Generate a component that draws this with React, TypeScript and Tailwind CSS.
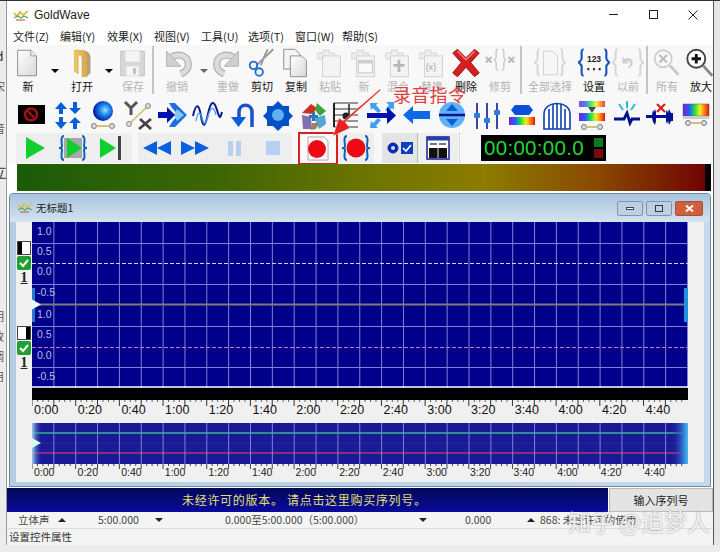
import React from "react";

const F = { fontFamily: '"Noto Sans CJK SC","Noto Sans",sans-serif' };

function Defs() {
  return (
    <svg width="0" height="0" className="absolute">
      <defs>
        <linearGradient id="rb" x1="0" x2="1" y1="0" y2="0">
          <stop offset="0" stopColor="#7a1fd0" />
          <stop offset=".25" stopColor="#2060ff" />
          <stop offset=".45" stopColor="#20e040" />
          <stop offset=".65" stopColor="#f0f020" />
          <stop offset=".85" stopColor="#ff7010" />
          <stop offset="1" stopColor="#e01010" />
        </linearGradient>
        <linearGradient id="pg" x1="0" x2="1" y1="0" y2="1">
          <stop offset="0" stopColor="#ffffff" />
          <stop offset="1" stopColor="#d8d8d8" />
        </linearGradient>
        <linearGradient id="fold" x1="0" x2="1" y1="0" y2="0">
          <stop offset="0" stopColor="#f0c860" />
          <stop offset="1" stopColor="#d8a848" />
        </linearGradient>
        <radialGradient id="sph" cx=".6" cy=".45" r=".6">
          <stop offset="0" stopColor="#a0e0ff" />
          <stop offset=".4" stopColor="#2090f0" />
          <stop offset="1" stopColor="#0010a0" />
        </radialGradient>
      </defs>
    </svg>
  );
}

const S = ({ w = 34, h = 34, vb, children }: { w?: number; h?: number; vb?: string; children: React.ReactNode }) => (
  <svg width={w} height={h} viewBox={vb || `0 0 ${w} ${h}`} className="block shrink-0">
    {children}
  </svg>
);

const Page = () => (
  <>
    <path d="M7 4h14l6 6v21H7z" fill="url(#pg)" stroke="#8a8a8a" />
    <path d="M21 4v6h6" fill="#eee" stroke="#999" />
  </>
);

const Clip = ({ children }: { children?: React.ReactNode }) => (
  <>
    <path d="M5 7h6v-3h6v3h6v6H5z" fill="#efefef" stroke="#d0d0d0" />
    <rect x="10" y="10" width="19" height="22" fill="#f4f4f4" stroke="#cfcfcf" />
    {children}
  </>
);

const icons: Record<string, React.ReactNode> = {
  new: <Page />,
  open: (
    <>
      <path d="M10 4h8c3 0 5 3 5 7v21h-5V13c0-3-1-4-3-4-1 0-1 2-1 4v16l-4-3z" fill="url(#fold)" stroke="#c89838" strokeWidth=".5" />
      <path d="M18 4c5 0 9 3 9 8v16l-4 4V11c0-3-2-6-5-7z" fill="#b8a070" />
    </>
  ),
  save: (
    <>
      <path d="M5 5h25v26H5z" fill="#d8d8d8" stroke="#c0c0c0" />
      <rect x="10" y="5" width="15" height="11" fill="#f5f5f5" />
      <rect x="11" y="21" width="13" height="10" fill="#f5f5f5" />
      <rect x="18" y="23" width="3" height="6" fill="#bbb" />
    </>
  ),
  undo: (
    <>
      <path d="M11 12c9-6 19-2 19 7 0 5-3 8-8 10" stroke="#b0b0b0" strokeWidth="7.5" fill="none" />
      <path d="M11 12c9-6 19-2 19 7 0 5-3 8-8 10" stroke="#dcdcdc" strokeWidth="5" fill="none" />
      <path d="M7 5v16h15z" fill="#d0d0d0" stroke="#b0b0b0" />
    </>
  ),
  redo: (
    <>
      <path d="M25 12c-9-6-19-2-19 7 0 5 3 8 8 10" stroke="#b0b0b0" strokeWidth="7.5" fill="none" />
      <path d="M25 12c-9-6-19-2-19 7 0 5 3 8 8 10" stroke="#dcdcdc" strokeWidth="5" fill="none" />
      <path d="M29 5v16H14z" fill="#d0d0d0" stroke="#b0b0b0" />
    </>
  ),
  cut: (
    <>
      <path d="M30 3 12 20M24 3c-3 6-6 13-7 17" stroke="#999" strokeWidth="2" fill="none" />
      <circle cx="9" cy="20" r="4" fill="none" stroke="#1f70d0" strokeWidth="2" />
      <circle cx="15" cy="27" r="4" fill="none" stroke="#1f70d0" strokeWidth="2" />
    </>
  ),
  copy: (
    <>
      <path d="M5 3h12l5 5v16H5z" fill="#f4f4f4" stroke="#8a8a8a" />
      <path d="M12 10h12l5 5v17H12z" fill="url(#pg)" stroke="#8a8a8a" />
    </>
  ),
  paste: <Clip />,
  pnew: (
    <Clip>
      <rect x="12" y="15" width="15" height="13" fill="#fafafa" stroke="#c4c4c4" />
      <rect x="12" y="15" width="15" height="3" fill="#cfcfcf" />
    </Clip>
  ),
  pmix: (
    <Clip>
      <path d="M19 14v13M13 20h12" stroke="#b8b8b8" strokeWidth="3" />
    </Clip>
  ),
  prep: (
    <Clip>
      <text x="11" y="25" fontSize="10" fill="#aaa" fontFamily="Liberation Sans">{"{x}"}</text>
    </Clip>
  ),
  del: (
    <>
      <path d="M4 7 9 3l9 9 9-9 5 4-9 10 9 11-5 4-9-10-9 10-5-4 9-11z" fill="#d42020" stroke="#a01010" />
      <path d="M9 5l9 9 9-9" stroke="#f08080" strokeWidth="1.5" fill="none" />
    </>
  ),
  trim: (
    <>
      <path d="M3 11l6 6M9 11l-6 6M27 11l6 6M33 11l-6 6" stroke="#b8b8b8" strokeWidth="2" />
      <path d="M16 3c-3 0-2 3-2 7s-2 3-2 4 2 0 2 4-1 7 2 7M20 3c3 0 2 3 2 7s2 3 2 4-2 0-2 4 1 7-2 7" stroke="#c8c8c8" strokeWidth="1.5" fill="none" />
    </>
  ),
  all: (
    <>
      <path d="M7 3c-3 0-2 5-2 9s-3 4-3 5 3 1 3 5-1 9 2 9M29 3c3 0 2 5 2 9s3 4 3 5-3 1-3 5 1 9-2 9" stroke="#d4d4d4" strokeWidth="2" fill="none" />
      <path d="M11 5h10l5 5v20H11z" fill="#f6f6f6" stroke="#d0d0d0" />
    </>
  ),
  set: (
    <>
      <path d="M7 3c-3 0-2 5-2 9s-3 4-3 5 3 1 3 5-1 9 2 9M29 3c3 0 2 5 2 9s3 4 3 5-3 1-3 5 1 9-2 9" stroke="#1050c0" strokeWidth="2.2" fill="none" />
      <text x="18" y="16" textAnchor="middle" fontSize="9" fontWeight="700" fill="#222" fontFamily="Liberation Sans">123</text>
      <path d="M11 24h2M17 24h2M23 24h2" stroke="#222" strokeWidth="2.5" />
    </>
  ),
  prev: (
    <>
      <path d="M7 3c-3 0-2 5-2 9s-3 4-3 5 3 1 3 5-1 9 2 9M29 3c3 0 2 5 2 9s3 4 3 5-3 1-3 5 1 9-2 9" stroke="#d4d4d4" strokeWidth="2" fill="none" />
      <path d="M12 11v7h7l-2-2c3-1 4 1 3 3s-2 4-3 4c4 0 6-3 6-6 0-4-5-6-8-4z" fill="#d0d0d0" />
    </>
  ),
  zall: (
    <>
      <circle cx="14" cy="13" r="9" fill="#f8f8f8" stroke="#d0d0d0" strokeWidth="2" />
      <path d="M10 9l8 8M18 9l-8 8" stroke="#bbb" strokeWidth="2" />
      <path d="M21 20l9 10" stroke="#c8c8c8" strokeWidth="3" />
    </>
  ),
  zin: (
    <>
      <circle cx="13" cy="13" r="9.5" fill="#fff" stroke="#444" strokeWidth="2" />
      <path d="M13 8v10M8 13h10" stroke="#111" strokeWidth="3" />
      <path d="M20 20l10 11" stroke="#888" strokeWidth="3" />
    </>
  ),
};

function Btn({ cls, icon, label, dim }: { cls: string; icon: string; label: string; dim?: boolean }) {
  return (
    <div className={`flex flex-col items-center shrink-0 overflow-visible ${cls}`}>
      <div className="h-[33px] w-[34px] shrink-0">
        <S w={34} h={34} vb="0 0 36 35">{icons[icon]}</S>
      </div>
      <div className={`text-[11px] leading-[14px] whitespace-nowrap ${dim ? "text-[#b4b4b4]" : "text-[#111]"}`}>{label}</div>
    </div>
  );
}

const Sep = ({ cls }: { cls: string }) => (
  <div className={`flex justify-center shrink-0 ${cls}`}>
    <div className="w-[2px] h-[48px] bg-[#c4c4c4]" />
  </div>
);

const DropA = ({ cls, c }: { cls: string; c: string }) => (
  <div className={`flex justify-center pt-[23px] shrink-0 ${cls}`}>
    <div className={`w-0 h-0 border-x-[4px] border-x-transparent border-t-[4px] ${c}`} />
  </div>
);

const BL = "#0a5fd8";

const t2: React.ReactNode[] = [
  <>
    <rect x="1" y="6" width="27" height="19" fill="#000" />
    <circle cx="14" cy="15.5" r="6" fill="none" stroke="#a01014" strokeWidth="2.5" />
    <path d="M10 11l8 9" stroke="#a01014" strokeWidth="2.5" />
  </>,
  <path d="M9 3l6 7h-4v5H7v-5H3zM23 15l-6-6h4V3h4v6h4zM9 30l6-7h-4v-5H7v5H3zM23 18l-6 6h4v6h4v-6h4z" fill={BL} />,
  <>
    <circle cx="16" cy="12" r="10" fill="url(#sph)" />
    <circle cx="7" cy="27" r="2.5" fill="#ddd" stroke="#777" />
    <circle cx="25" cy="27" r="2.5" fill="#ddd" stroke="#777" />
    <path d="M9 27h14" stroke="#c0b060" strokeWidth="1.5" />
  </>,
  <>
    <path d="M3 3l6 6 6-6M9 9v7" stroke="#555" strokeWidth="3" fill="none" />
    <path d="M17 30l12-10M18 20l11 10" stroke="#444" strokeWidth="2.8" />
    <path d="M7 25L26 7" stroke="#d0c060" strokeWidth="1.6" />
    <circle cx="7" cy="25" r="2.5" fill="#ddd" stroke="#888" />
    <circle cx="26" cy="7" r="2.5" fill="#ddd" stroke="#888" />
  </>,
  <>
    <path d="M12 4h6l12 12-12 12h-6l3-5 6-7-6-7z" fill="#1a70e0" />
    <path d="M20 10l7 6-7 6-3-6z" fill="#80c8f0" />
    <path d="M1 13h9V8l8 8-8 8v-5H1z" fill="#000fb0" />
  </>,
  <>
    <path d="M1 17c3-14 6-12 8 0s4 12 7-2 6-14 9-4 3 8 5 2" stroke="#0a1a90" strokeWidth="2" fill="none" />
    <path d="M4 22c2-10 4-10 6-3s3 8 6-2 6-10 8-1" stroke="#40a0e8" strokeWidth="1.3" fill="none" />
  </>,
  <>
    <path d="M12 20V13c0-9 13-9 13 0v15" stroke="#1a50c8" strokeWidth="3.5" fill="none" />
    <path d="M4 18h15l-7.5 10z" fill={BL} />
  </>,
  <>
    <path d="M16 2l5 5h6v6l4 4-4 4v6h-6l-5 5-5-5H5v-6l-4-4 4-4V7h6z" fill="#0050c8" />
    <circle cx="16" cy="16" r="6" fill="#60b0f0" />
  </>,
  <>
    <path d="M5 14 14 5l6 4-4 6z" fill="#d03020" />
    <path d="M20 4l9 8-6 5-5-6z" fill="#40a040" />
    <path d="M5 16l9 2 1 12H6z" fill="#8070b0" />
    <path d="M17 19l11-3 1 9-7 5z" fill="#50a8d8" />
    <path d="M15 24h7l-3 6-5 1z" fill="#a08060" />
    <path d="M15 13h3v3h3v3h-3v3h-3v-3h-3v-3h3z" fill="#2878c0" />
  </>,
  <>
    <path d="M3 4h24M3 10h24M3 16h24M3 22h24M3 28h24" stroke="#333" strokeWidth="1.2" />
    <path d="M3 4v24" stroke="#222" strokeWidth="2" />
    <circle cx="15" cy="17" r="3.5" fill="#222" />
    <path d="M18 5v12" stroke="#222" strokeWidth="1.5" />
  </>,
  <>
    <path d="M4 4h8l-2 2 5 6-3 2-5-5-2 2zM4 29h8l-2-2 5-6-3-2-5 5-2-2zM20 3h8v8l-2-2-4 4-3-2 4-5z" fill="#40a0f0" />
    <path d="M1 14h20V8l9 8.5-9 8.5v-6H1z" fill="#000fb0" />
  </>,
  <path d="M2 16l10-9v5h17v8H12v5z" fill="#0a6ae8" />,
  <>
    <circle cx="16" cy="16" r="13" fill="#60b0f8" />
    <path d="M16 5l6 7H10zM16 27l6-7H10z" fill="#0a5fd8" />
    <path d="M3 16h26" stroke="#001090" strokeWidth="2.5" />
  </>,
  <>
    <path d="M6 4v26M16 4v26M26 4v26" stroke="#000a90" strokeWidth="1.5" />
    <rect x="3" y="14" width="6" height="5" rx="1" fill="#2a80e0" />
    <rect x="13" y="19" width="6" height="5" rx="1" fill="#2a80e0" />
    <rect x="23" y="11" width="6" height="5" rx="1" fill="#2a80e0" />
  </>,
  <>
    <path d="M9 6h14l4 5-4 5H9l-4-5z" fill="#0a50d8" />
    <path d="M3 18h26v8H3z" fill="url(#rb)" />
  </>,
  <>
    <path d="M3 30V15C3 1 29 1 29 15v15z" fill="#fff" stroke="#0a40b0" strokeWidth="1.6" />
    <path d="M8 30V10M12 30V5M16 30V4M20 30V5M24 30V10" stroke="#0a40b0" strokeWidth="1.6" />
  </>,
  <>
    <rect x="3" y="2" width="26" height="6" fill="url(#rb)" opacity=".8" />
    <path d="M12 8h8l-4 6z" fill="#355" />
    <rect x="3" y="14" width="26" height="8" fill="url(#rb)" />
    <circle cx="8" cy="28" r="2.5" fill="#ddd" stroke="#777" />
    <circle cx="24" cy="28" r="2.5" fill="#ddd" stroke="#777" />
    <path d="M10 28h12" stroke="#c0b060" strokeWidth="1.5" />
  </>,
  <>
    <path d="M16 2v7M8 5l4 6M24 5l-4 6" stroke="#30b8d8" strokeWidth="2" />
    <path d="M3 20h10l3-6 3 10 2-4h8" stroke="#001090" strokeWidth="2.8" fill="none" />
  </>,
  <>
    <path d="M1 16h6l1-5 1 2 1-3 1 3v3h10v-3l1-2 1 3 1-4 2 4h2v8h-2l-2 4-1-4-1 3-1-3v-3H11v3l-1 4-2-3-1-4H1z" fill="#001090" />
    <path d="M12 5l8 8M20 5l-8 8" stroke="#d02020" strokeWidth="2.2" />
  </>,
  <>
    <rect x="3" y="5" width="26" height="12" fill="url(#rb)" stroke="#555" strokeWidth=".5" />
    <rect x="3" y="17" width="26" height="3" fill="#ccc" />
    <circle cx="8" cy="24" r="2.5" fill="#ddd" stroke="#777" />
    <circle cx="24" cy="24" r="2.5" fill="#ddd" stroke="#777" />
    <path d="M10 24h12" stroke="#c0b060" strokeWidth="1.5" />
  </>,
];

const TOP = Array.from({ length: 30 }, (_, i) => 21.85 * (i + 1));
const times = ["0:00","0:20","0:40","1:00","1:20","1:40","2:00","2:20","2:40","3:00","3:20","3:40","4:00","4:20","4:40"];

function WaveMain() {
  return (
    <svg width="656" height="195" viewBox="0 0 656 195" className="block">
      <rect width="656" height="166" fill="#00008a" />
      {TOP.map((x) => <path key={x} d={`M${x} 0V166`} stroke="#7f82d4" strokeWidth="1" />)}
      <path d="M0 21.5H656M0 62.5H656M0 104.5H656M0 145.5H656" stroke="#7f82d4" />
      <path d="M0 41.5H656" stroke="#d0d0f4" strokeDasharray="4 2" />
      <path d="M0 125.5H656" stroke="#c078d0" strokeDasharray="4 2" />
      <path d="M0 82.5H656" stroke="#7c7c7c" strokeWidth="2" />
      <path d="M0 165H656" stroke="#fff" strokeWidth="1.5" />
      <rect x="0" y="66" width="3" height="34" fill="#2a78d0" />
      <path d="M0 77.5l9 5-9 5z" fill="#e8fff0" />
      <rect x="652" y="66" width="4" height="34" fill="#2090e0" />
      {[["1.0", 9], ["0.5", 29], ["0.0", 49], ["-0.5", 70], ["1.0", 92], ["0.5", 112], ["0.0", 133], ["-0.5", 154]].map(([t, y], i) => (
        <text key={i} x="5" y={Number(y) + 4} fontSize="10.5" fill="#b8bce8" fontFamily="Liberation Sans">{t}</text>
      ))}
      <rect y="166" width="656" height="12" fill="#000" />
      {Array.from({ length: 120 }, (_, i) => (
        <path key={i} d={`M${i * 5.46} 178v${i % 4 === 0 ? 6 : 2}`} stroke={i % 4 === 0 ? "#333" : "#666"} />
      ))}
      {times.map((t, i) => (
        <text key={t} x={2 + i * 43.7} y="192" fontSize="12.5" fill="#111" fontFamily="Liberation Sans">{t}</text>
      ))}
    </svg>
  );
}

function WaveOverview() {
  return (
    <svg width="656" height="54" viewBox="0 0 656 54" className="block">
      <defs>
        <linearGradient id="ed" x1="0" x2="1" y1="0" y2="0">
          <stop offset="0" stopColor="#9ad0f0" />
          <stop offset="1" stopColor="#2030a0" stopOpacity="0" />
        </linearGradient>
        <linearGradient id="ed2" x1="1" x2="0" y1="0" y2="0">
          <stop offset="0" stopColor="#40c0f0" />
          <stop offset=".25" stopColor="#3a80e0" />
          <stop offset="1" stopColor="#2030a0" stopOpacity="0" />
        </linearGradient>
      </defs>
      <rect width="656" height="41" fill="#1a1a96" />
      <path d="M0 10H656" stroke="#2a9090" strokeWidth="2" />
      <path d="M0 30H656" stroke="#8c2a80" strokeWidth="2" />
      <path d="M0 20H656" stroke="#2828a8" />
      {TOP.map((x) => <path key={x} d={`M${x} 0V41`} stroke="#7f82d4" />)}
      <rect width="10" height="41" fill="url(#ed)" />
      <rect x="640" width="16" height="41" fill="url(#ed2)" />
      <path d="M0 15l9 5-9 5z" fill="#d8ffe8" />
      {Array.from({ length: 120 }, (_, i) => (
        <path key={i} d={`M${i * 5.46} 41v${i % 4 === 0 ? 5 : 2}`} stroke="#444" />
      ))}
      {times.map((t, i) => (
        <text key={t} x={2 + i * 43.6} y="53" fontSize="10.5" fill="#222" fontFamily="Liberation Sans">{t}</text>
      ))}
    </svg>
  );
}

const ChannelCtl = ({ right }: { right?: boolean }) => (
  <div className="flex flex-col items-center">
    <div className={`w-[14px] h-[14px] border border-[#444] bg-white flex ${right ? "justify-end" : "justify-start"}`}>
      <div className="w-[4px] h-full bg-black" />
    </div>
    <div className="w-[14px] h-[14px] mt-[1px] rounded-[2px] bg-[#20a030] flex items-center justify-center">
      <svg width="12" height="12" viewBox="0 0 12 12"><path d="M2 6l3 3 5-6" stroke="#fff" strokeWidth="2" fill="none" /></svg>
    </div>
    <div className="text-[14px] leading-[15px] font-bold text-[#222] underline" style={{ fontFamily: "Liberation Serif, serif" }}>1</div>
  </div>
);

const TBtn = ({ cls, children }: { cls: string; children: React.ReactNode }) => (
  <div className={`flex items-center justify-center shrink-0 ${cls}`}>{children}</div>
);

function Tri({ up, cls }: { up?: boolean; cls: string }) {
  return (
    <div className={`shrink-0 w-0 h-0 border-x-[4px] border-x-transparent ${up ? "border-b-[4px] border-b-[#222]" : "border-t-[4px] border-t-[#222]"} ${cls}`} />
  );
}

export default function App() {
  return (
    <div className="w-[720px] h-[552px] bg-[#ececec] flex flex-col overflow-hidden relative" style={F}>
      <Defs />
      <div className="h-[1px] bg-[#333] shrink-0" />
      <div className="flex h-[544px] shrink-0">
        <div className="w-[7px] shrink-0 overflow-hidden border-r border-[#999] text-[11px] text-[#555] flex flex-col">
          <div className="mt-[48px] text-[#222] text-[12px] leading-[14px] ml-[-4px]">d</div>
          <div className="mt-[16px] leading-[14px] ml-[-6px]">宋</div>
          <div className="mt-[28px] leading-[14px] ml-[-6px]">音</div>
          <div className="mt-[26px] leading-[20px] ml-[-9px] text-[16px]">立</div>
          <div className="mt-[128px] leading-[14px] ml-[-7px]">明</div>
          <div className="mt-[6px] leading-[14px] ml-[-7px]">政</div>
          <div className="mt-[6px] leading-[14px] ml-[-7px]">调</div>
          <div className="mt-[6px] leading-[14px] ml-[-7px]">用</div>
        </div>

        <div className="w-[707px] shrink-0 flex flex-col bg-white border-r border-[#555]">
          {/* title */}
          <div className="h-[27px] shrink-0 flex items-center bg-white">
            <div className="ml-[6px] mr-[5px]">
              <svg width="16" height="12" viewBox="0 0 16 12">
                <path d="M1 4l3 3 3-4 3 3 5-4" stroke="#d8b030" strokeWidth="1.5" fill="none" />
                <path d="M1 9l4-2 3 2 3-2 4 2" stroke="#50b050" strokeWidth="1.3" fill="none" />
                <path d="M3 11h9" stroke="#d04040" />
              </svg>
            </div>
            <div className="text-[12px] text-[#222]" style={{ fontFamily: "Liberation Sans" }}>GoldWave</div>
            <div className="ml-auto flex items-center">
              <div className="w-[40px] flex justify-center"><div className="w-[9px] h-[1px] bg-[#222]" /></div>
              <div className="w-[40px] flex justify-center"><div className="w-[9px] h-[9px] border border-[#222]" /></div>
              <div className="w-[40px] flex justify-center">
                <svg width="10" height="10" viewBox="0 0 10 10"><path d="M.5.5l9 9M9.5.5l-9 9" stroke="#222" /></svg>
              </div>
            </div>
          </div>
          {/* menu */}
          <div className="h-[16px] shrink-0 flex items-center pl-[6px] text-[11px] text-[#222] leading-none whitespace-nowrap">
            {["文件(Z)","编辑(Y)","效果(X)","视图(V)","工具(U)","选项(T)","窗口(W)","帮助(S)"].map((m) => (
              <div key={m} className="w-[47px] shrink-0">{m}</div>
            ))}
          </div>
          {/* toolbar 1 */}
          <div className="h-[53px] shrink-0 mt-[1px] pt-[1px] flex pl-[7px] bg-[#f8f8f8] overflow-hidden">
            <Btn cls="w-[28px]" icon="new" label="新" />
            <DropA cls="w-[26px]" c="border-t-black" />
            <Btn cls="w-[28px]" icon="open" label="打开" />
            <DropA cls="w-[26px]" c="border-t-black" />
            <Btn cls="w-[22px]" icon="save" label="保存" dim />
            <Sep cls="w-[18px]" />
            <Btn cls="w-[30px]" icon="undo" label="撤销" dim />
            <DropA cls="w-[24px]" c="border-t-[#666]" />
            <Btn cls="w-[24px]" icon="redo" label="重做" dim />
            <Btn cls="w-[34px] ml-[5px]" icon="cut" label="剪切" />
            <Btn cls="w-[34px]" icon="copy" label="复制" />
            <Btn cls="w-[34px]" icon="paste" label="粘贴" dim />
            <Btn cls="w-[34px]" icon="pnew" label="新" dim />
            <Btn cls="w-[34px]" icon="pmix" label="混合" dim />
            <Btn cls="w-[34px]" icon="prep" label="替换" dim />
            <Btn cls="w-[34px]" icon="del" label="删除" />
            <Btn cls="w-[34px]" icon="trim" label="修剪" dim />
            <Sep cls="w-[8px]" />
            <Btn cls="w-[50px]" icon="all" label="全部选择" dim />
            <Btn cls="w-[34px] ml-[2px]" icon="set" label="设置" />
            <Btn cls="w-[34px]" icon="prev" label="以前" dim />
            <Sep cls="w-[4px]" />
            <Btn cls="w-[34px] ml-[1px]" icon="zall" label="所有" dim />
            <Btn cls="w-[34px]" icon="zin" label="放大" />
          </div>
          {/* toolbar 2 */}
          <div className="h-[34px] shrink-0 flex items-center pl-[9px] bg-[#f8f8f8] overflow-hidden">
            {t2.map((n, i) => (
              <div key={i} className="w-[34.9px] shrink-0 flex justify-center"><S w={32} h={32} vb="0 0 32 32">{n}</S></div>
            ))}
          </div>
          {/* toolbar 3 */}
          <div className="h-[32px] shrink-0 flex items-center pl-[9px] bg-[#f8f8f8]">
            <div className="w-[116px] h-[30px] bg-[#eeeeee] flex items-center">
              <TBtn cls="w-[38px]"><S w={24} h={24}><path d="M3 1l19 11L3 23z" fill="#10d030" /></S></TBtn>
              <TBtn cls="w-[38px]">
                <S w={28} h={26}>
                  <rect x="5" y="3" width="18" height="20" fill="#a8a8a8" />
                  <path d="M8 3l15 10L8 23z" fill="#10d030" />
                  <path d="M5 1C1 1 3 9 3 11s-3 2-3 2 3 0 3 2-2 10 2 10M23 1c4 0 2 8 2 10s3 2 3 2-3 0-3 2 2 10-2 10" stroke="#1060c0" strokeWidth="2" fill="none" />
                </S>
              </TBtn>
              <TBtn cls="w-[38px]"><S w={24} h={24}><path d="M1 2l16 10L1 22z" fill="#10d030" /><rect x="19" y="0" width="3" height="24" fill="#444" /></S></TBtn>
            </div>
            <div className="w-[6px]" />
            <div className="w-[154px] h-[30px] bg-[#eeeeee] flex items-center">
              <TBtn cls="w-[38px]"><S w={28} h={16}><path d="M0 8l14-7v14zM14 8l14-7v14z" fill="#0a5fe0" /></S></TBtn>
              <TBtn cls="w-[38px]"><S w={28} h={16}><path d="M28 8L14 1v14zM14 8L0 1v14z" fill="#0a5fe0" /></S></TBtn>
              <TBtn cls="w-[40px]"><div className="flex gap-[3px]"><div className="w-[5px] h-[15px] bg-[#b8d0f0]" /><div className="w-[5px] h-[15px] bg-[#b8d0f0]" /></div></TBtn>
              <TBtn cls="w-[38px]"><div className="w-[14px] h-[14px] bg-[#b8d0f0]" /></TBtn>
            </div>
            <div className="w-[6px]" />
            <div className="w-[40px] h-[33px] border-[2px] border-[#d82020] flex items-center justify-center shrink-0">
              <S w={26} h={26}>
                <path d="M3 2h16l4 4v19H3z" fill="#fff" stroke="#aaa" />
                <circle cx="12" cy="14" r="9" fill="#ee0a14" />
              </S>
            </div>
            <TBtn cls="w-[36px] bg-[#eeeeee] h-[30px]">
              <S w={28} h={28}>
                <path d="M5 2C1 2 3 9 3 12s-3 2-3 2 3 0 3 2-2 10 2 10M23 2c4 0 2 7 2 10s3 2 3 2-3 0-3 2 2 10-2 10" stroke="#1060c0" strokeWidth="2" fill="none" />
                <circle cx="14" cy="14" r="9.5" fill="#ee0a14" />
              </S>
            </TBtn>
            <div className="w-[8px]" />
            <TBtn cls="w-[36px] h-[30px] bg-[#e4e4e4] border-r border-[#bbb]">
              <S w={30} h={16}>
                <circle cx="8" cy="8" r="5" fill="#0c28b8" stroke="#0c28b8" />
                <circle cx="8" cy="8" r="2" fill="#cfe0ff" />
                <rect x="16" y="2" width="12" height="12" fill="#0c40c0" />
                <path d="M18 8l3 3 5-6" stroke="#fff" strokeWidth="1.6" fill="none" />
              </S>
            </TBtn>
            <TBtn cls="w-[40px] h-[30px] bg-[#eeeeee]">
              <S w={24} h={24}>
                <rect x="1" y="1" width="22" height="22" fill="#fff" stroke="#1a1a90" strokeWidth="1.5" />
                <rect x="1" y="1" width="22" height="3.5" fill="#2040b0" />
                <rect x="4" y="7" width="7" height="2" fill="#777" />
                <rect x="13" y="7" width="7" height="2" fill="#777" />
                <rect x="3" y="12" width="18" height="10" fill="#111" />
                <path d="M12 12v10" stroke="#ddd" />
              </S>
            </TBtn>
            <div className="w-[23px] flex justify-start"><div className="h-[30px] w-0 border-l border-dotted border-[#bbb] ml-[1px]" /></div>
            <div className="w-[125px] h-[26px] bg-black flex items-center pl-[3px]">
              <div className="text-[20.5px] leading-none text-[#22d43a] tracking-[0.3px]" style={{ fontFamily: "Liberation Sans" }}>00:00:00.0</div>
              <div className="ml-auto mr-[3px] flex flex-col gap-[2px]">
                <div className="w-[9px] h-[9px] bg-[#0a7a20]" />
                <div className="w-[9px] h-[9px] bg-[#7a0a0a]" />
              </div>
            </div>
          </div>
          {/* level bar */}
          <div className="h-[28px] shrink-0 flex pl-[10px] pr-[2px] bg-white">
            <div className="flex-1 h-[27px] bg-[linear-gradient(90deg,#1a5c08_0%,#3f6604_30%,#6b7400_50%,#8c7c00_68%,#8a4a00_84%,#6f0404_100%)]" />
            <div className="w-[6px] h-[27px] bg-black" />
          </div>
          {/* child window */}
          <div className="h-[294px] shrink-0 mt-[1px] mx-[2px] flex flex-col border border-[#6f8aa0] rounded-t-[4px] bg-[linear-gradient(90deg,#b4cde3,#c4d9ea)] px-[6px] pb-[4px]">
            <div className="h-[28px] shrink-0 flex items-center bg-[linear-gradient(180deg,#a8c4de,#d4e3ef)] mx-[-6px] px-[6px] rounded-t-[4px]">
              <svg width="16" height="12" viewBox="0 0 16 12" className="mr-[3px] ml-[1px]">
                <path d="M1 3l3 3 3-4 3 3 5-4" stroke="#d8c040" strokeWidth="1.5" fill="none" />
                <path d="M1 8l4-2 3 2 3-2 4 2" stroke="#50b050" strokeWidth="1.3" fill="none" />
                <path d="M3 10h9" stroke="#d04040" />
              </svg>
              <div className="text-[10.5px] text-[#222]">无标题1</div>
              <div className="ml-auto flex gap-[3px] mr-[1px]">
                <div className="w-[26px] h-[15px] border border-[#7d94ab] rounded-[2px] bg-[#bcd0e2] flex items-center justify-center"><div className="w-[8px] h-[3px] bg-white border border-[#445]" /></div>
                <div className="w-[26px] h-[15px] border border-[#7d94ab] rounded-[2px] bg-[#bcd0e2] flex items-center justify-center"><div className="w-[8px] h-[7px] bg-transparent border border-[#334]" /></div>
                <div className="w-[28px] h-[15px] border border-[#a05040] rounded-[2px] bg-[#d0603c] flex items-center justify-center">
                  <svg width="9" height="7" viewBox="0 0 9 7"><path d="M1 .5l7 6M8 .5l-7 6" stroke="#fff" strokeWidth="2" /></svg>
                </div>
              </div>
            </div>
            <div className="flex-1 bg-[#f0f0f0] flex min-h-0">
              <div className="w-[16px] shrink-0 flex flex-col items-center">
                <div className="mt-[19px]"><ChannelCtl /></div>
                <div className="mt-[41px]"><ChannelCtl right /></div>
              </div>
              <div className="flex flex-col">
                <WaveMain />
                <div className="h-[6px]" />
                <WaveOverview />
              </div>
            </div>
          </div>
          {/* banner */}
          <div className="h-[24px] shrink-0 mt-[1px] flex">
            <div className="w-[601px] bg-[linear-gradient(180deg,#000858,#0a0a9c)] flex items-center pl-[175px] text-[12px] text-[#e4e070] tracking-[0.7px]">未经许可的版本。 请点击这里购买序列号。</div>
            <div className="flex-1 ml-[1px] bg-[#e4e4e4] border border-[#bbb] flex items-center justify-center text-[11px] text-[#222]">输入序列号</div>
          </div>
          {/* status 1 */}
          <div className="h-[17px] shrink-0 bg-[#f4f4f4] flex items-center text-[10.5px] text-[#444] whitespace-nowrap border-b border-[#ddd]">
            <div className="w-[43px] pl-[11px] shrink-0">立体声</div>
            <Tri up cls="ml-[8px]" />
            <div className="ml-[32px] w-[58px] shrink-0">5:00.000</div>
            <Tri cls="ml-[-1px]" />
            <div className="ml-[62px] w-[134px] shrink-0">0.000至5:00.000（5:00.000）</div>
            <Tri cls="ml-[60px]" />
            <div className="ml-[38px] w-[30px] shrink-0">0.000</div>
            <Tri up cls="ml-[32px]" />
            <div className="ml-[5px]">868: 未经许可的使用</div>
          </div>
          {/* status 2 */}
          <div className="h-[17px] shrink-0 bg-[#f4f4f4] flex items-center pl-[2px] text-[10.5px] text-[#333] border-b border-[#666]">设置控件属性</div>
        </div>
        <div className="flex-1 bg-[#e6e6e6]" />
      </div>
      <div className="flex-1 bg-[#ececec]" />
      {/* annotation */}
      <div className="absolute left-[393px] top-[82px] text-[18px] leading-[24px] text-[#e04040] tracking-[0.3px]">录音指令</div>
      <svg width="60" height="60" viewBox="0 0 60 60" className="absolute left-[328px] top-[85px]">
        <path d="M53 5 17 37l5 6-17 8 6-18 4 3L52 4z" fill="#e82020" stroke="#fff" strokeWidth=".4" />
      </svg>
      {/* watermark */}
      <div className="absolute left-[568px] top-[506px] text-[23px] leading-[30px] text-white/85 whitespace-nowrap [text-shadow:0_0_2px_#8a8a8a]">知乎 @追梦人</div>
    </div>
  );
}
